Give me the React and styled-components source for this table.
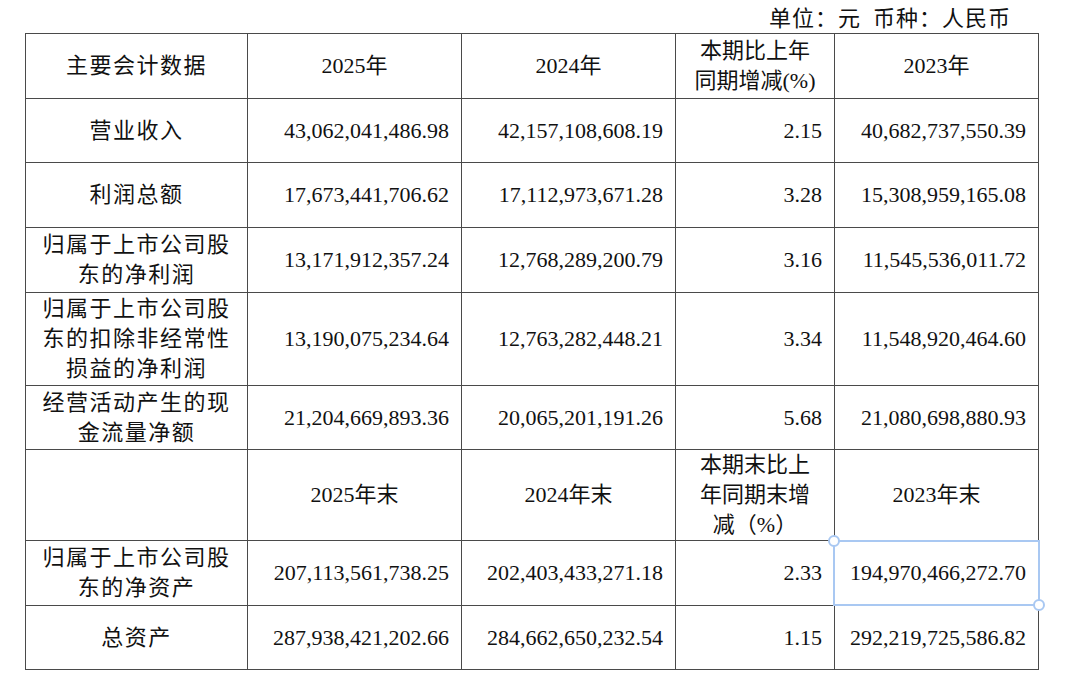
import React from 'react'
import styled, { createGlobalStyle } from 'styled-components'

const rows = [
    { label: ['营业收入'], values: ['43,062,041,486.98', '42,157,108,608.19', '2.15', '40,682,737,550.39'], h: 64 },
    { label: ['利润总额'], values: ['17,673,441,706.62', '17,112,973,671.28', '3.28', '15,308,959,165.08'], h: 65 },
    { label: ['归属于上市公司股', '东的净利润'], values: ['13,171,912,357.24', '12,768,289,200.79', '3.16', '11,545,536,011.72'], h: 65 },
    { label: ['归属于上市公司股', '东的扣除非经常性', '损益的净利润'], values: ['13,190,075,234.64', '12,763,282,448.21', '3.34', '11,548,920,464.60'], h: 93 },
    { label: ['经营活动产生的现', '金流量净额'], values: ['21,204,669,893.36', '20,065,201,191.26', '5.68', '21,080,698,880.93'], h: 64 },
]

const endRows = [
    { label: ['归属于上市公司股', '东的净资产'], values: ['207,113,561,738.25', '202,403,433,271.18', '2.33', '194,970,466,272.70'], h: 65, selected: 3 },
    { label: ['总资产'], values: ['287,938,421,202.66', '284,662,650,232.54', '1.15', '292,219,725,586.82'], h: 64 },
]

const Lines = ({ lines }) => lines.map((l, i) => (
    <React.Fragment key={i}>
        {i > 0 && <br />}
        {l}
    </React.Fragment>
))

const DataRow = ({ row }) => (
    <tr style={{ height: row.h }}>
        <LabelCell><Lines lines={row.label} /></LabelCell>
        {row.values.map((v, i) => (
            <NumCell key={i}>
                {v}
                {row.selected === i && (
                    <Selection>
                        <Handle $corner="tl" />
                        <Handle $corner="br" />
                    </Selection>
                )}
            </NumCell>
        ))}
    </tr>
)

const App = () => (
    <>
        <GlobalStyle />
        <Page>
            <Caption>单位：元&ensp;币种：人民币</Caption>
            <Table>
                <colgroup>
                    <col style={{ width: 222 }} />
                    <col style={{ width: 214 }} />
                    <col style={{ width: 214 }} />
                    <col style={{ width: 159 }} />
                    <col style={{ width: 204 }} />
                </colgroup>
                <tbody>
                    <tr style={{ height: 65 }}>
                        <LabelCell>主要会计数据</LabelCell>
                        <HeadCell>2025年</HeadCell>
                        <HeadCell>2024年</HeadCell>
                        <HeadCell><Lines lines={['本期比上年', '同期增减(%)']} /></HeadCell>
                        <HeadCell>2023年</HeadCell>
                    </tr>
                    {rows.map((r, i) => <DataRow key={i} row={r} />)}
                    <tr style={{ height: 91 }}>
                        <HeadCell />
                        <HeadCell>2025年末</HeadCell>
                        <HeadCell>2024年末</HeadCell>
                        <HeadCell><Lines lines={['本期末比上', '年同期末增', '减（%）']} /></HeadCell>
                        <HeadCell>2023年末</HeadCell>
                    </tr>
                    {endRows.map((r, i) => <DataRow key={i} row={r} />)}
                </tbody>
            </Table>
        </Page>
    </>
)

// style
const GlobalStyle = createGlobalStyle`
    body {
        margin: 0;
        background: #fff;
        color: #111;
        font-family: "Liberation Serif", "Noto Sans CJK SC", serif;
    }
`

const Page = styled.div`
    width: 1080px;
    padding-left: 25px;
    box-sizing: border-box;
`

const Caption = styled.div`
    width: 1013px;
    box-sizing: border-box;
    padding: 4px 27px 0 0;
    height: 33px;
    line-height: 29px;
    text-align: right;
    font-size: 22px;
    letter-spacing: 1px;
`

const Table = styled.table`
    width: 1013px;
    table-layout: fixed;
    border-collapse: collapse;
    font-size: 22px;
    line-height: 30px;

    td {
        border: 1px solid #4a4a4a;
        padding: 0 12px;
        vertical-align: middle;
    }
`

const HeadCell = styled.td`
    text-align: center;
`

const LabelCell = styled.td`
    text-align: center;
    letter-spacing: 1.5px;
    padding: 0 6px;
`

const NumCell = styled.td`
    position: relative;
    text-align: right;
`

const Selection = styled.div`
    position: absolute;
    inset: -1px -2px -1px -2px;
    border: 2px solid #a9c8f2;
    pointer-events: none;
`

const Handle = styled.span`
    position: absolute;
    width: 8px;
    height: 8px;
    border-radius: 50%;
    background: #fff;
    border: 2px solid #a9c8f2;
    ${p => p.$corner === 'tl' ? 'left: -7px; top: -7px;' : 'right: -7px; bottom: -7px;'}
`

export default App
